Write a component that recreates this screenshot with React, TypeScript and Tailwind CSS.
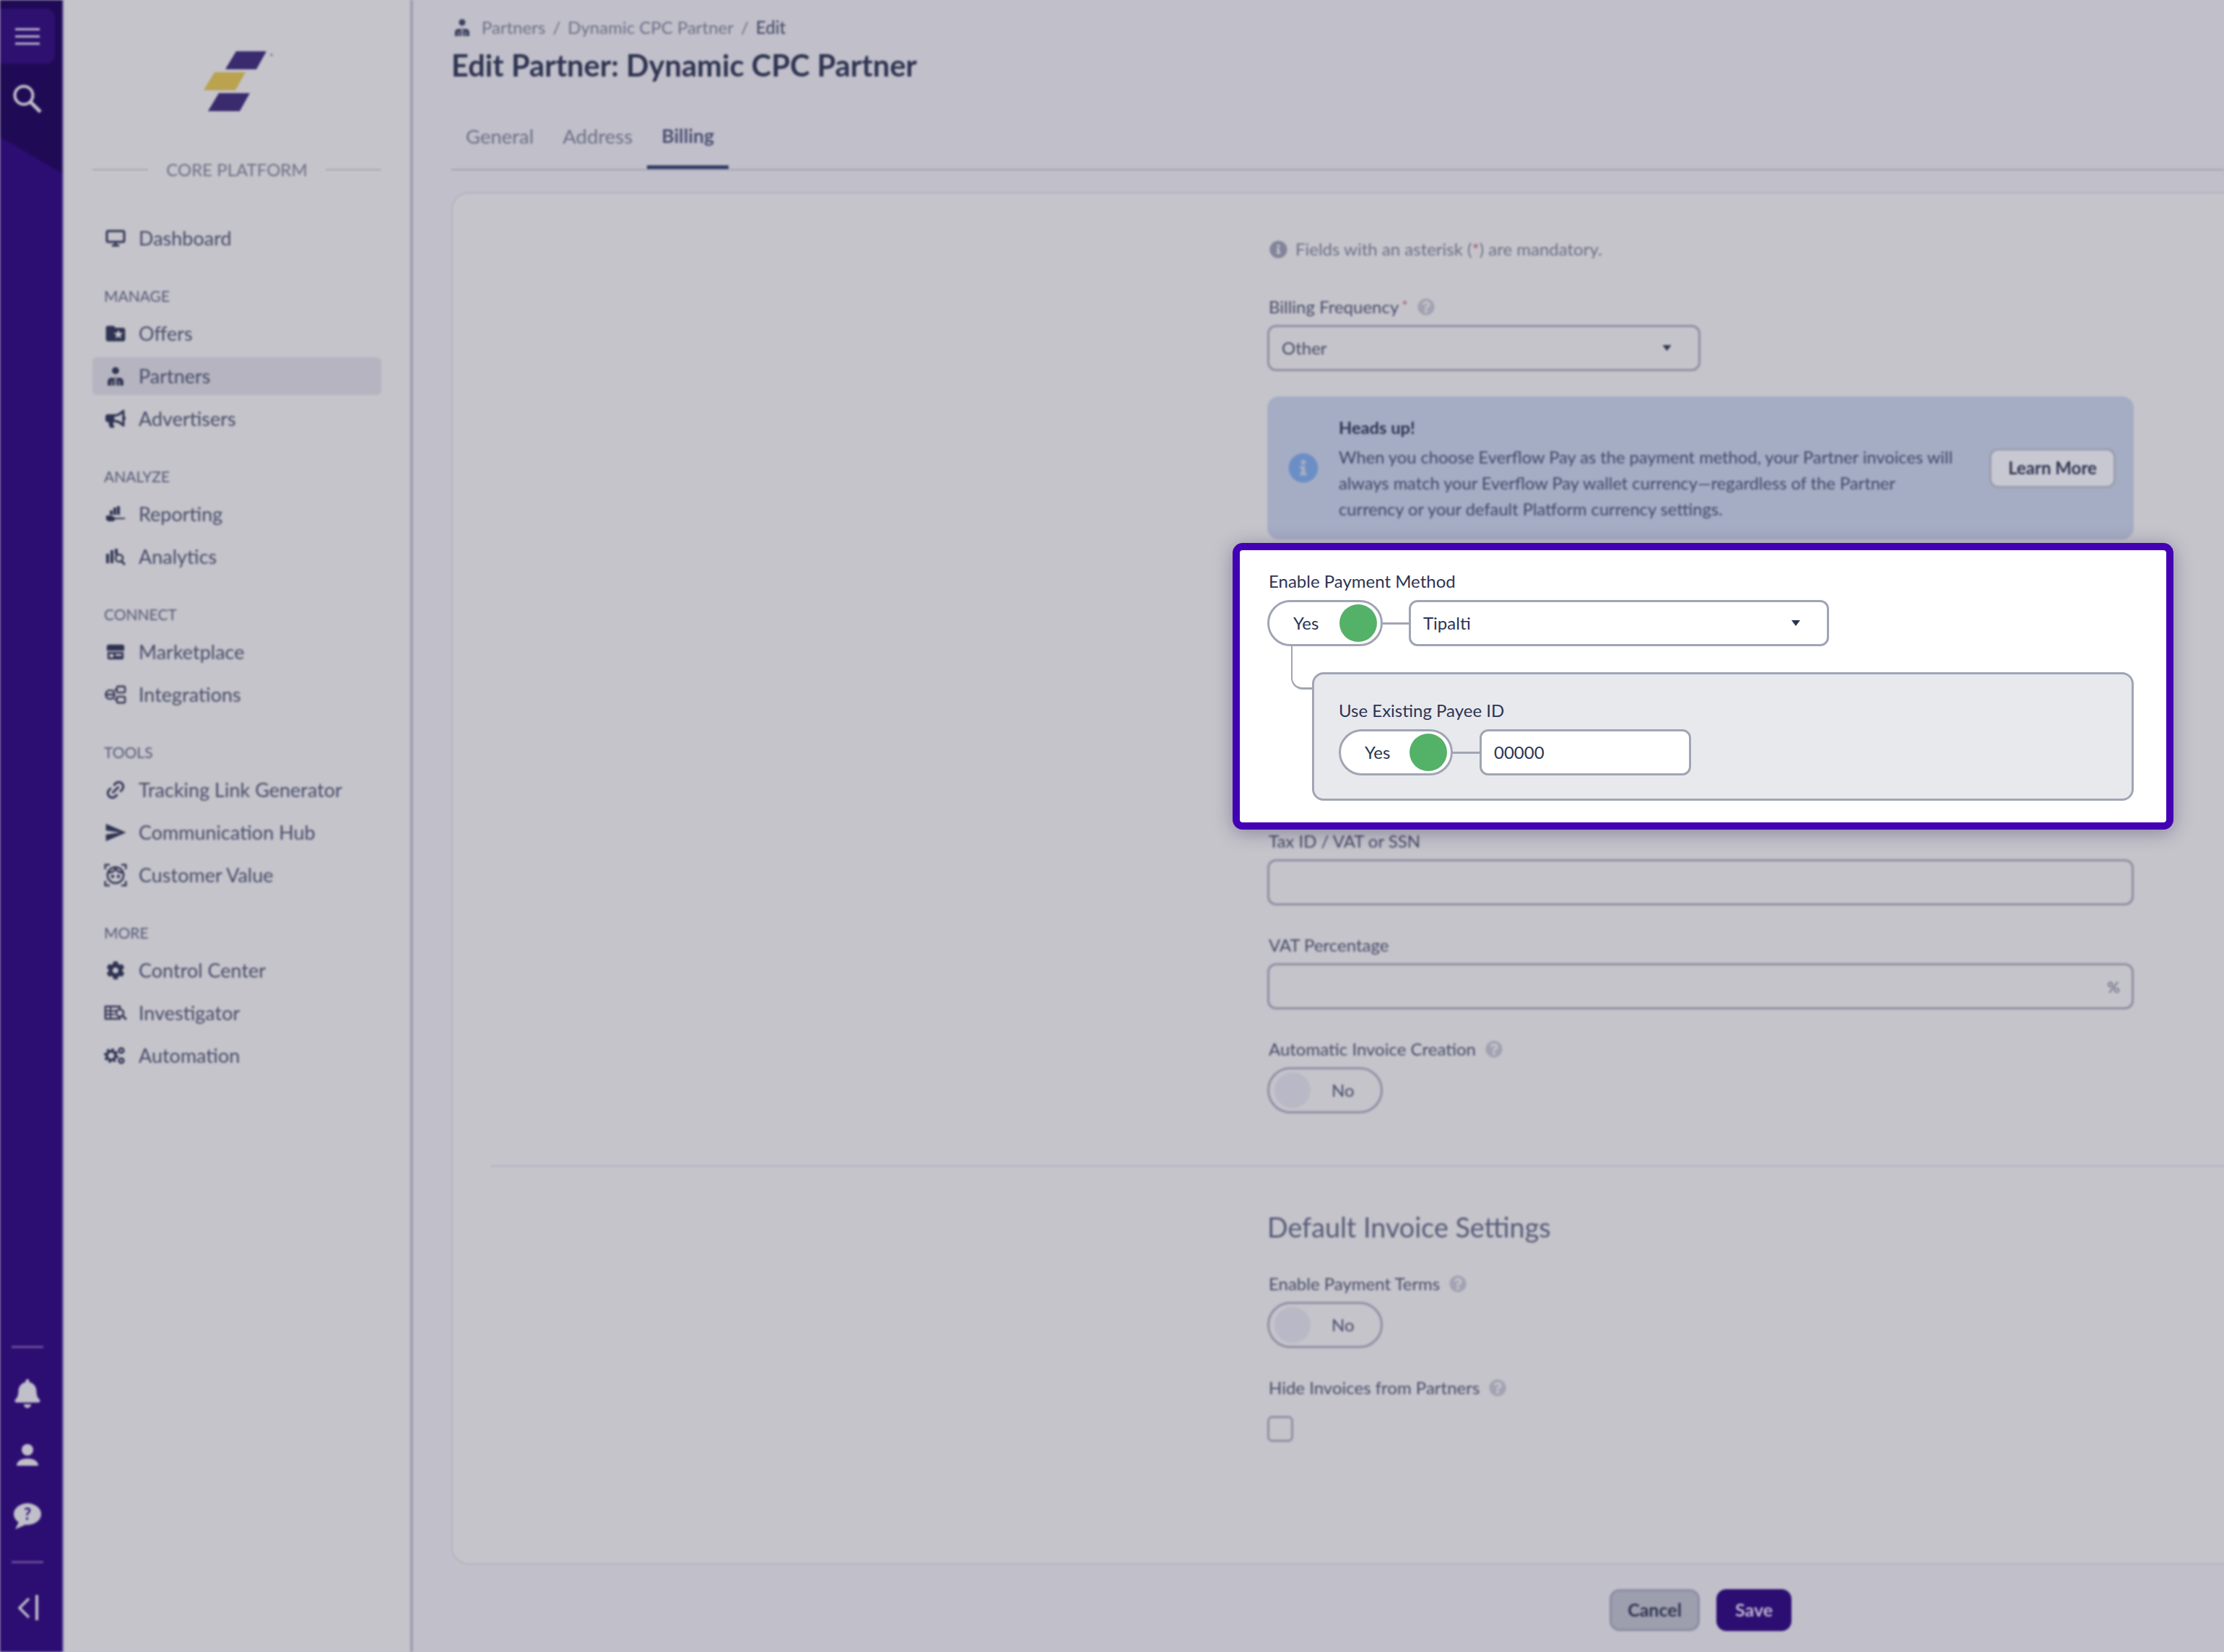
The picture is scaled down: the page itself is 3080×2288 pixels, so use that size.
import { Link2 } from "lucide-react";
import { FaBell, FaBullhorn, FaCog, FaInfoCircle, FaQuestionCircle } from "react-icons/fa";
import { MdFolderSpecial, MdSend } from "react-icons/md";

// ---------------- Icons -----------------
function PartnersIcon({ className }: { className?: string }) {
  return (
    <svg viewBox="0 0 24 24" fill="currentColor" className={className}>
      <circle cx="12" cy="5" r="4.5" />
      <path d="M2 24v-5c0-3 2-5 5-5h10c3 0 5 2 5 5v5z" />
      <path d="M7 18v6M17 18v6M11 12h2v12h-2z" stroke="#c5c4cb" strokeWidth="1" />
    </svg>
  );
}

function MonitorIcon({ className }: { className?: string }) {
  return (
    <svg viewBox="0 0 28 24" fill="none" stroke="currentColor" className={className}>
      <rect x="2" y="2" width="24" height="15" rx="2" strokeWidth="3" />
      <path d="M14 17v4M9 22h10" strokeWidth="3" />
    </svg>
  );
}

function SearchGlass({ className }: { className?: string }) {
  return (
    <svg viewBox="0 0 40 40" fill="none" stroke="currentColor" className={className}>
      <circle cx="15" cy="15" r="12.5" strokeWidth="4" />
      <path d="M24 24l14 14" strokeWidth="5" />
    </svg>
  );
}

function ReportingIcon({ className }: { className?: string }) {
  return (
    <svg viewBox="0 0 28 24" fill="currentColor" className={className}>
      <rect x="11" y="3" width="4" height="10" />
      <rect x="16" y="1" width="4" height="12" />
      <rect x="6" y="7" width="4" height="6" />
      <path d="M1 14h8l4 3h14v2H14l-3 3H4l-3-2z" />
    </svg>
  );
}

function AnalyticsIcon({ className }: { className?: string }) {
  return (
    <svg viewBox="0 0 28 24" fill="currentColor" className={className}>
      <rect x="1" y="8" width="4" height="13" />
      <rect x="7" y="3" width="4" height="18" />
      <rect x="13" y="1" width="4" height="8" />
      <circle cx="19" cy="14" r="5" fill="none" stroke="currentColor" strokeWidth="2.5" />
      <path d="M22 18l5 5" stroke="currentColor" strokeWidth="3" />
    </svg>
  );
}

function MarketIcon({ className }: { className?: string }) {
  return (
    <svg viewBox="0 0 28 24" className={className}>
      <path d="M4 1h20a3 3 0 0 1 3 3v6H1V4a3 3 0 0 1 3-3z" fill="currentColor" />
      <path d="M2 12h24v9a2 2 0 0 1-2 2H4a2 2 0 0 1-2-2z" fill="currentColor" />
      <rect x="5" y="15" width="6" height="5" fill="#c5c4cb" />
      <rect x="14" y="15" width="9" height="3" fill="#c5c4cb" />
    </svg>
  );
}

function IntegrationsIcon({ className }: { className?: string }) {
  return (
    <svg viewBox="0 0 32 28" fill="none" stroke="currentColor" strokeWidth="2.5" className={className}>
      <circle cx="8" cy="14" r="6.5" />
      <rect x="18" y="2" width="12" height="9" rx="2" />
      <rect x="18" y="17" width="12" height="9" rx="2" />
      <path d="M1 14h13M14 7h4M14 21h4" />
    </svg>
  );
}

function FaceIcon({ className }: { className?: string }) {
  return (
    <svg viewBox="0 0 36 36" fill="none" stroke="currentColor" strokeWidth="2.8" className={className}>
      <path d="M2 9V2h7M27 2h7v7M2 27v7h7M27 34h7v-7" />
      <circle cx="18" cy="18" r="12.5" />
      <path d="M7 14c6 0 9-2 11-6 2 4 5 6 11 6" />
      <circle cx="13.5" cy="20" r="1.2" fill="currentColor" />
      <circle cx="22.5" cy="20" r="1.2" fill="currentColor" />
    </svg>
  );
}

function InvestigatorIcon({ className }: { className?: string }) {
  return (
    <svg viewBox="0 0 32 24" fill="none" stroke="currentColor" className={className}>
      <rect x="2" y="3" width="20" height="17" strokeWidth="2.5" />
      <path d="M2 9h15M2 14h13M9 3v17" strokeWidth="2" />
      <circle cx="22" cy="12" r="5" strokeWidth="2.5" fill="#c5c4cb" />
      <path d="M26 16l5 5" strokeWidth="3" />
    </svg>
  );
}

function AutomationIcon({ className }: { className?: string }) {
  return (
    <svg viewBox="0 0 32 24" fill="none" stroke="currentColor" className={className}>
      <circle cx="10" cy="12" r="6" strokeWidth="3.5" />
      <circle cx="10" cy="12" r="8.5" strokeWidth="3" strokeDasharray="3.5 3.2" />
      <circle cx="24" cy="5" r="3.2" strokeWidth="2.8" />
      <circle cx="24" cy="19" r="3.2" strokeWidth="2.8" />
    </svg>
  );
}

function UserIcon({ className }: { className?: string }) {
  return (
    <svg viewBox="0 0 32 32" fill="currentColor" className={className}>
      <circle cx="16" cy="9" r="8" />
      <path d="M1 31c0-6 6-10 15-10s15 4 15 10z" />
    </svg>
  );
}

function HelpBubble({ className }: { className?: string }) {
  return (
    <svg viewBox="0 0 38 36" className={className}>
      <ellipse cx="19" cy="15" rx="19" ry="15" fill="currentColor" />
      <path d="M8 24l-6 12 14-6z" fill="currentColor" />
      <text x="19" y="23" textAnchor="middle" fontSize="22" fontWeight="700" fontFamily="Lato, sans-serif" fill="#2c0d72">?</text>
    </svg>
  );
}

function Caret({ className }: { className: string }) {
  return (
    <svg viewBox="0 0 12 8" fill="currentColor" className={className}>
      <path d="M0 0h12L6 8z" />
    </svg>
  );
}

// ---------------- Sidebar data -----------------
const NAV = [
  { heading: "MANAGE", items: [
    { label: "Offers", icon: <MdFolderSpecial className="w-[32px] h-[32px]" /> },
    { label: "Partners", icon: <PartnersIcon className="w-[26px] h-[26px]" />, active: true },
    { label: "Advertisers", icon: <FaBullhorn className="w-[28px] h-[26px]" /> },
  ] },
  { heading: "ANALYZE", items: [
    { label: "Reporting", icon: <ReportingIcon className="w-[28px] h-[24px]" /> },
    { label: "Analytics", icon: <AnalyticsIcon className="w-[28px] h-[24px]" /> },
  ] },
  { heading: "CONNECT", items: [
    { label: "Marketplace", icon: <MarketIcon className="w-[26px] h-[24px]" /> },
    { label: "Integrations", icon: <IntegrationsIcon className="w-[30px] h-[28px]" /> },
  ] },
  { heading: "TOOLS", items: [
    { label: "Tracking Link Generator", icon: <Link2 className="w-[30px] h-[30px] -rotate-45" strokeWidth={2.4} /> },
    { label: "Communication Hub", icon: <MdSend className="w-[34px] h-[34px]" /> },
    { label: "Customer Value", icon: <FaceIcon className="w-[34px] h-[34px]" /> },
  ] },
  { heading: "MORE", items: [
    { label: "Control Center", icon: <FaCog className="w-[26px] h-[26px]" /> },
    { label: "Investigator", icon: <InvestigatorIcon className="w-[32px] h-[24px]" /> },
    { label: "Automation", icon: <AutomationIcon className="w-[32px] h-[24px]" /> },
  ] },
];

function NavRow({ label, icon, active }: { label: string; icon: React.ReactNode; active?: boolean }) {
  return (
    <div className={`flex items-center h-[52px] mb-[7px] pl-[16px] gap-[16px] rounded-[6px] ${active ? "bg-[#b5b4c0]" : ""}`}>
      <span className="w-[32px] flex justify-center text-[#2f3352] shrink-0">{icon}</span>
      <span className="text-[27px] text-[#464a68] whitespace-nowrap">{label}</span>
    </div>
  );
}

function Rail() {
  return (
    <div className="relative w-[88px] h-full shrink-0 bg-[#2c0d72] border-r-2 border-[#6f5fa0] flex flex-col">
      <div className="h-[240px] bg-[#1f0a55] [clip-path:polygon(0_0,100%_0,100%_100%,0_79%)] pt-[12px]">
        <div className="w-[76px] h-[76px] rounded-r-[12px] bg-[#2e1070] flex flex-col items-center justify-center gap-[7px]">
          <span className="w-[34px] h-[3px] bg-[#b9b3cc]" />
          <span className="w-[34px] h-[3px] bg-[#b9b3cc]" />
          <span className="w-[34px] h-[3px] bg-[#b9b3cc]" />
        </div>
        <div className="mt-[29px] w-[76px] flex justify-center">
          <SearchGlass className="w-[40px] h-[40px] text-[#c0bfca]" />
        </div>
      </div>
      <div className="mt-auto w-[76px] flex flex-col items-center pb-[44px] text-[#c0bfca]">
        <span className="w-[44px] h-[3px] bg-[#6a4f9a]" />
        <FaBell className="w-[36px] h-[40px] mt-[43px]" />
        <UserIcon className="w-[32px] h-[32px] mt-[49px]" />
        <HelpBubble className="w-[38px] h-[36px] mt-[51px]" />
        <span className="w-[44px] h-[3px] bg-[#6a4f9a] mt-[44px]" />
        <div className="flex items-center gap-[7px] mt-[44px]">
          <svg viewBox="0 0 18 34" fill="none" stroke="currentColor" strokeWidth="3.5" className="w-[18px] h-[34px]">
            <path d="M16 4L3 17l13 13" />
          </svg>
          <span className="w-[4px] h-[35px] bg-[#c0bfca]" />
        </div>
      </div>
    </div>
  );
}

function Sidebar() {
  return (
    <aside className="w-[484px] h-full shrink-0 bg-[#c5c4cb] border-r-4 border-[#9e9dae] pl-[40px]">
      <div className="w-[400px]">
        <div className="pt-[71px] flex justify-center">
          <svg viewBox="0 0 100 83" className="w-[100px] h-[83px]">
            <polygon points="34,25 49,0 91,0 77,25" fill="#3a2b6e" />
            <polygon points="4,54 19,29 62,29 48,54" fill="#baa24f" />
            <polygon points="10,83 25,58 68,58 54,83" fill="#3a2b6e" />
            <circle cx="98" cy="5" r="2" fill="#8d87a8" />
          </svg>
        </div>
        <div className="mt-[66px] h-[30px] flex items-center justify-between">
          <span className="w-[77px] h-[2px] bg-[#a7a6b2]" />
          <span className="text-[24px] text-[#6c6f86] whitespace-nowrap">CORE PLATFORM</span>
          <span className="w-[77px] h-[2px] bg-[#a7a6b2]" />
        </div>
        <div className="mt-[54px] mb-[6px]">
          <NavRow label="Dashboard" icon={<MonitorIcon className="w-[28px] h-[24px]" />} />
        </div>
        {NAV.map((section) => (
          <div key={section.heading} className="mt-[43px]">
            <div className="h-[22px] mb-[15px] pl-[16px] flex items-center text-[21px] text-[#545875]">{section.heading}</div>
            {section.items.map((item) => (
              <NavRow key={item.label} {...item} />
            ))}
          </div>
        ))}
      </div>
    </aside>
  );
}

// ---------------- Form pieces -----------------
function Label({ text, required, help }: { text: string; required?: boolean; help?: boolean }) {
  return (
    <div className="h-[30px] mb-[10px] flex items-center text-[24px] text-[#464a68] whitespace-nowrap pl-[2px]">
      {text}
      {required && <span className="text-[#a35a6c] ml-[4px] text-[20px] -mt-[6px]">*</span>}
      {help && <FaQuestionCircle className="w-[24px] h-[24px] ml-[13px] text-[#a2a2b3]" />}
    </div>
  );
}

function DimToggleNo() {
  return (
    <div className="w-[160px] h-[64px] rounded-full border-[3px] border-[#8f8ea3] flex items-center pl-[7px] gap-[29px]">
      <span className="w-[50px] h-[50px] rounded-full bg-[#b9b8c6]" />
      <span className="text-[24px] text-[#464a68]">No</span>
    </div>
  );
}

function YesToggle({ className }: { className: string }) {
  return (
    <div className={`h-[64px] rounded-full border-[3px] border-[#a0a5b4] bg-white flex items-center justify-between pl-[33px] pr-[5px] ${className}`}>
      <span className="text-[24px] text-[#2b3454]">Yes</span>
      <span className="w-[52px] h-[52px] rounded-full bg-[#54b168]" />
    </div>
  );
}

function DimInput({ suffix }: { suffix?: string }) {
  return (
    <div className="h-[64px] rounded-[12px] border-[3px] border-[#8f8ea3] flex items-center justify-end pr-[16px] text-[22px] text-[#5c5f7a]">
      {suffix}
    </div>
  );
}

function HighlightBox() {
  return (
    <div className="absolute left-[1707px] top-[752px] w-[1303px] h-[397px] rounded-[14px] border-[10px] border-[#4400b4] bg-white pt-[28px] pl-[38px] shadow-[0_4px_26px_rgba(30,20,60,0.35)] [font-family:Lato,sans-serif]">
      <div className="h-[30px] mb-[11px] flex items-center text-[24px] text-[#2b3454] pl-[2px]">Enable Payment Method</div>
      <div className="flex items-center">
        <YesToggle className="w-[160px]" />
        <span className="w-[36px] h-[3px] bg-[#a0a5b4]" />
        <div className="w-[582px] h-[64px] rounded-[12px] border-[3px] border-[#a0a5b4] flex items-center justify-between pl-[17px] pr-[36px] text-[24px] text-[#2b3454]">
          Tipalti
          <Caret className="w-[14px] h-[8px] text-[#2b3454]" />
        </div>
      </div>
      <div className="relative mt-[36px] ml-[62px] w-[1138px] h-[178px] rounded-[16px] border-[3px] border-[#a0a5b4] bg-[#e8e9ed] pt-[35px] pl-[34px]">
        <span className="absolute left-[-32px] top-[-41px] w-[32px] h-[62px] border-l-2 border-b-[3px] border-[#a0a5b4] rounded-bl-[16px]" />
        <div className="h-[30px] mb-[11px] flex items-center text-[24px] text-[#2b3454]">Use Existing Payee ID</div>
        <div className="flex items-center">
          <YesToggle className="w-[158px]" />
          <span className="w-[37px] h-[3px] bg-[#a0a5b4]" />
          <div className="w-[293px] h-[64px] rounded-[12px] border-[3px] border-[#a0a5b4] bg-white flex items-center pl-[17px] text-[24px] text-[#2b3454]">00000</div>
        </div>
      </div>
    </div>
  );
}

function Main() {
  return (
    <main className="flex-1 min-w-0 h-full bg-[#c0bfca] pl-[53px] overflow-hidden">
      <div className="pt-[23px] h-[53px] flex items-center gap-[10px] text-[24px] text-[#6c6f86] whitespace-nowrap">
        <PartnersIcon className="w-[24px] h-[26px] text-[#3c4060] ml-[3px] mr-[3px]" />
        <span className="ml-[2px]">Partners</span>
        <span>/</span>
        <span>Dynamic CPC Partner</span>
        <span>/</span>
        <span className="text-[#464a68] font-medium">Edit</span>
      </div>
      <h1 className="mt-[12px] h-[50px] flex items-center text-[41.6px] font-bold text-[#2e3350] whitespace-nowrap">Edit Partner: Dynamic CPC Partner</h1>
      <div className="mt-[35px] h-[86px] flex border-b-2 border-[#a3a2b3] text-[27.5px]">
        <div className="px-[20px] pb-[2px] flex items-center text-[#6c6f86] border-b-[5px] border-transparent">General</div>
        <div className="px-[20px] pb-[2px] flex items-center text-[#6c6f86] border-b-[5px] border-transparent">Address</div>
        <div className="px-[20px] pb-[2px] flex items-center text-[26.5px] font-bold text-[#4b5073] border-b-[5px] border-[#2f3a63]">Billing</div>
      </div>
      <div className="mt-[30px] w-[2600px] h-[1901px] rounded-[24px] border-2 border-[#b4b3c0] bg-[#c5c4cb] pt-[62px]">
        <div className="ml-[1128px] w-[1200px]">
          <div className="h-[30px] flex items-center gap-[11px] text-[24px] text-[#6b6e86] whitespace-nowrap pl-[3px]">
            <FaInfoCircle className="w-[25px] h-[25px] text-[#82859a]" />
            <span>Fields with an asterisk (<span className="text-[#a35a6c]">*</span>) are mandatory.</span>
          </div>
          <div className="mt-[50px]">
            <Label text="Billing Frequency" required help />
            <div className="w-[600px] h-[64px] rounded-[12px] border-[3px] border-[#8f8ea3] flex items-center justify-between pl-[17px] pr-[37px] text-[24px] text-[#464a68]">
              Other
              <Caret className="w-[13px] h-[8px] text-[#2f3352]" />
            </div>
          </div>
          <div className="mt-[35px] h-[198px] rounded-[16px] bg-[#a5adc4] flex items-center pl-[29px] pr-[25px]">
            <FaInfoCircle className="w-[42px] h-[42px] text-[#6b8fc5] shrink-0" />
            <div className="ml-[28px] w-[860px] shrink-0 text-[23.7px] leading-[36px] text-[#3f4466]">
              <p className="font-bold text-[#2e3350] mb-[5px]">Heads up!</p>
              <p>When you choose Everflow Pay as the payment method, your Partner invoices will always match your Everflow Pay wallet currency—regardless of the Partner currency or your default Platform currency settings.</p>
            </div>
            <div className="ml-auto w-[175px] h-[55px] rounded-[12px] border-[3px] border-[#9a9dae] bg-[#c8c8d2] flex items-center justify-center text-[24px] font-bold text-[#2e3350]">Learn More</div>
          </div>
          {/* room for the highlighted box that lies over this part of the form */}
          <div className="h-[403px]" />
          <Label text="Tax ID / VAT or SSN" />
          <DimInput />
          <div className="mt-[40px]">
            <Label text="VAT Percentage" />
            <DimInput suffix="%" />
          </div>
          <div className="mt-[40px]">
            <Label text="Automatic Invoice Creation" help />
            <DimToggleNo />
          </div>
        </div>
        <div className="mt-[72px] ml-[53px] h-[2px] bg-[#b5b4c1]" />
        <div className="ml-[1128px] w-[1200px]">
          <h2 className="mt-[59px] h-[50px] flex items-center text-[37.7px] text-[#565a76] whitespace-nowrap">Default Invoice Settings</h2>
          <div className="mt-[38px]">
            <Label text="Enable Payment Terms" help />
            <DimToggleNo />
          </div>
          <div className="mt-[40px]">
            <Label text="Hide Invoices from Partners" help />
            <div className="mt-[24px] w-[36px] h-[36px] rounded-[7px] border-[3px] border-[#8f8ea3]" />
          </div>
        </div>
      </div>
    </main>
  );
}

function Footer() {
  return (
    <div className="absolute left-[2229px] top-[2201px] flex gap-[23px] text-[25px] font-bold">
      <div className="w-[125px] h-[58px] rounded-[14px] border-[3px] border-[#8a8ca0] bg-[#9d9eae] text-[#2e3350] flex items-center justify-center">Cancel</div>
      <div className="w-[104px] h-[58px] rounded-[14px] bg-[#2c0d72] text-[#bfb9d0] flex items-center justify-center">Save</div>
    </div>
  );
}

export default function App() {
  return (
    <div className="relative w-[3080px] h-[2288px] overflow-hidden bg-[#c0bfca] [font-family:Lato,sans-serif]">
      <div className="relative w-full h-full flex blur-[1.5px]">
        <Rail />
        <Sidebar />
        <Main />
        <Footer />
      </div>
      <HighlightBox />
    </div>
  );
}
